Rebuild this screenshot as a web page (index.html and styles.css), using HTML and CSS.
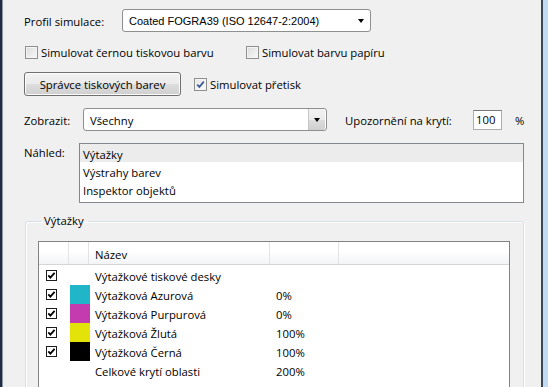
FILE: index.html
```html
<!DOCTYPE html>
<html lang="cs">
<head>
    <meta charset="UTF-8">
    <title>Náhled výstupu</title>
    <link rel="stylesheet" href="styles.css">
</head>
<body>
    <div class="window">
        <div class="frame-left"></div>
        <div class="dialog">
            <div class="row row-profile">
                <span class="label label-profile">Profil simulace:</span>
                <div class="combo combo-profile">
                    <span class="combo-text classic">Coated FOGRA39 (ISO 12647-2:2004)</span>
                    <span class="combo-arrow"><span class="tri"></span></span>
                </div>
            </div>

            <div class="row row-checks">
                <label class="check check-black"><span class="box"></span>Simulovat černou tiskovou barvu</label>
                <label class="check"><span class="box"></span>Simulovat barvu papíru</label>
            </div>

            <div class="row row-button">
                <button class="btn">Správce tiskových barev</button>
                <label class="check">
                    <span class="box checked">
                        <svg width="9" height="9" viewBox="0 0 9 9"><path d="M1.2 4.6 L3.4 6.9 L7.8 1.6" fill="none" stroke="#3c5898" stroke-width="1.7"/></svg>
                    </span>Simulovat přetisk
                </label>
            </div>

            <div class="row row-show">
                <span class="label label-show">Zobrazit:</span>
                <div class="combo combo-show">
                    <span class="combo-text">Všechny</span>
                    <span class="combo-arrow button-look"><span class="tri"></span></span>
                </div>
                <span class="label label-warn">Upozornění na krytí:</span>
                <span class="num-input">100</span>
                <span class="label">%</span>
            </div>

            <div class="row row-preview">
                <span class="label label-preview">Náhled:</span>
                <ul class="listbox">
                    <li class="selected">Výtažky</li>
                    <li>Výstrahy barev</li>
                    <li>Inspektor objektů</li>
                </ul>
            </div>

            <fieldset class="group">
                <legend>Výtažky</legend>
                <div class="sep-table">
                    <div class="sep-row sep-head">
                        <span class="c-check"></span>
                        <span class="c-swatch"></span>
                        <span class="c-name">Název</span>
                        <span class="c-pct"></span>
                        <span class="c-rest"></span>
                    </div>
                    <div class="sep-row">
                        <span class="c-check"><span class="tick"><svg width="9" height="9" viewBox="0 0 9 9"><path d="M1.3 4.3 L3.4 6.6 L7.6 1.8" fill="none" stroke="#000" stroke-width="1.8"/></svg></span></span>
                        <span class="c-swatch"></span>
                        <span class="c-name">Výtažkové tiskové desky</span>
                        <span class="c-pct"></span>
                        <span class="c-rest"></span>
                    </div>
                    <div class="sep-row">
                        <span class="c-check"><span class="tick"><svg width="9" height="9" viewBox="0 0 9 9"><path d="M1.3 4.3 L3.4 6.6 L7.6 1.8" fill="none" stroke="#000" stroke-width="1.8"/></svg></span></span>
                        <span class="c-swatch"><span class="swatch cyan"></span></span>
                        <span class="c-name">Výtažková Azurová</span>
                        <span class="c-pct">0%</span>
                        <span class="c-rest"></span>
                    </div>
                    <div class="sep-row">
                        <span class="c-check"><span class="tick"><svg width="9" height="9" viewBox="0 0 9 9"><path d="M1.3 4.3 L3.4 6.6 L7.6 1.8" fill="none" stroke="#000" stroke-width="1.8"/></svg></span></span>
                        <span class="c-swatch"><span class="swatch magenta"></span></span>
                        <span class="c-name">Výtažková Purpurová</span>
                        <span class="c-pct">0%</span>
                        <span class="c-rest"></span>
                    </div>
                    <div class="sep-row">
                        <span class="c-check"><span class="tick"><svg width="9" height="9" viewBox="0 0 9 9"><path d="M1.3 4.3 L3.4 6.6 L7.6 1.8" fill="none" stroke="#000" stroke-width="1.8"/></svg></span></span>
                        <span class="c-swatch"><span class="swatch yellow"></span></span>
                        <span class="c-name">Výtažková Žlutá</span>
                        <span class="c-pct">100%</span>
                        <span class="c-rest"></span>
                    </div>
                    <div class="sep-row">
                        <span class="c-check"><span class="tick"><svg width="9" height="9" viewBox="0 0 9 9"><path d="M1.3 4.3 L3.4 6.6 L7.6 1.8" fill="none" stroke="#000" stroke-width="1.8"/></svg></span></span>
                        <span class="c-swatch"><span class="swatch black"></span></span>
                        <span class="c-name">Výtažková Černá</span>
                        <span class="c-pct">100%</span>
                        <span class="c-rest"></span>
                    </div>
                    <div class="sep-row">
                        <span class="c-check"></span>
                        <span class="c-swatch"></span>
                        <span class="c-name">Celkové krytí oblasti</span>
                        <span class="c-pct">200%</span>
                        <span class="c-rest"></span>
                    </div>
                    <div class="sep-row"></div>
                </div>
            </fieldset>
        </div>
        <div class="frame-right"></div>
    </div>
</body>
</html>
```

FILE: styles.css
```css
* {
    margin: 0;
    padding: 0;
    box-sizing: border-box;
}

body {
    width: 548px;
    height: 387px;
    overflow: hidden;
    background: #f0f0f0;
    font-family: 'Open Sans', 'Noto Sans', sans-serif;
    font-size: 11.3px;
    color: #000;
}

.window {
    display: flex;
    height: 387px;
}

.frame-left {
    width: 3px;
    border-left: 2px solid #1f2c42;
    background: #8c97a3;
}

.frame-right {
    width: 7px;
    border-left: 2px solid #3a4856;
    background: #c3dbf0;
}

.dialog {
    flex: 1;
    padding: 9px 0 0 21px;
    overflow: hidden;
}

.row {
    display: flex;
    align-items: center;
}

.label {
    white-space: nowrap;
    padding-top: 1px;
}

/* combo boxes */
.combo {
    display: flex;
    align-items: center;
    height: 23px;
    background: #fff;
    border: 1px solid #8e8f8f;
    border-radius: 3px;
}

.combo-text {
    flex: 1;
    padding: 1px 0 0 6px;
    white-space: nowrap;
}

.classic {
    font-family: 'Liberation Sans', Arial, sans-serif;
    font-size: 11px;
}

.combo-arrow {
    width: 17px;
    height: 21px;
    display: flex;
    align-items: center;
    justify-content: center;
    margin-right: 1px;
}

.button-look {
    background: linear-gradient(#f2f2f2, #ebebeb 50%, #dddddd 51%, #cfcfcf);
    border-left: 1px solid #c5c5c5;
    border-radius: 0 2px 2px 0;
}

.tri {
    width: 0;
    height: 0;
    border-left: 3.5px solid transparent;
    border-right: 3.5px solid transparent;
    border-top: 4px solid #000;
    margin-top: 1px;
}

.label-profile {
    width: 98px;
}

.combo-profile {
    width: 249px;
}

/* checkboxes */
.row-checks {
    margin-top: 11px;
    height: 18px;
}

.check {
    display: flex;
    align-items: center;
    gap: 3px;
    white-space: nowrap;
}

.check-black {
    margin-left: 1px;
    width: 221px;
}

.box {
    width: 13px;
    height: 13px;
    border: 1px solid #8e8f8f;
    background: linear-gradient(135deg, #dcdcdc, #f8f8f8);
    box-shadow: inset 0 0 0 1px #f4f4f4;
    display: flex;
    align-items: center;
    justify-content: center;
}

.box.checked {
    background: linear-gradient(135deg, #e6e6e6, #fbfbfb);
}

/* button row */
.row-button {
    margin-top: 11px;
    gap: 13px;
}

.btn {
    width: 157px;
    height: 24px;
    font-family: inherit;
    font-size: 11.3px;
    color: #000;
    border: 1px solid #707070;
    border-radius: 3px;
    background: linear-gradient(#f2f2f2, #ebebeb 48%, #dddddd 52%, #cfcfcf);
    box-shadow: inset 0 0 0 1px #fbfbfb;
}

/* show row */
.row-show {
    margin-top: 12px;
}

.label-show {
    width: 59px;
}

.combo-show {
    width: 244px;
}

.label-warn {
    margin-left: 18px;
    width: 128px;
}

.num-input {
    width: 29px;
    height: 20px;
    padding-left: 2px;
    background: #fff;
    border: 1px solid #abadb3;
    border-top-color: #7a7a7a;
    line-height: 18px;
    margin-right: 13px;
}

/* preview list */
.row-preview {
    margin-top: 12px;
    align-items: flex-start;
}

.label-preview {
    width: 55px;
    padding-top: 2px;
}

.listbox {
    list-style: none;
    width: 445px;
    height: 60px;
    background: #fff;
    border: 1px solid #828790;
}

.listbox li {
    height: 18px;
    line-height: 17px;
    padding: 2px 0 0 3px;
}

.listbox li.selected {
    background: #ececec;
}

/* separations group */
.group {
    margin: 10px 0 0 1px;
    width: 499px;
    height: 200px;
    border: 1px solid #d5dfe5;
    border-radius: 3px;
    box-shadow: inset 1px 1px 0 #fff, 1px 1px 0 #fff;
    padding: 12px 13px 0 12px;
}

.group legend {
    margin-left: 3px;
    padding: 0 4px 0 3px;
    line-height: 16px;
}

.sep-table {
    background: #fff;
    border: 1px solid #828282;
    height: 200px;
}

.sep-row {
    display: flex;
    height: 19px;
    align-items: center;
    white-space: nowrap;
}

.sep-head {
    height: 23px;
    background: linear-gradient(#ffffff, #ffffff 40%, #f3f4f6);
    border-bottom: 1px solid #d5d5d5;
    margin-bottom: 1px;
}

.sep-head span {
    height: 100%;
    display: flex;
    align-items: center;
    border-right: 1px solid #e2e3e4;
}

.sep-head .c-rest {
    border-right: none;
}

.c-check {
    width: 30px;
    padding-left: 7px;
    display: flex;
    align-items: center;
}

.c-swatch {
    width: 20px;
    height: 100%;
}

.c-name {
    width: 181px;
    padding: 2px 0 0 6px;
}

.c-pct {
    width: 69px;
    padding: 2px 0 0 6px;
}

.c-rest {
    flex: 1;
}

.tick {
    width: 11px;
    height: 11px;
    border: 1px solid #1c1c1c;
    background: #fff;
    display: flex;
    align-items: center;
    justify-content: center;
}

.swatch {
    display: block;
    width: 20px;
    height: 19px;
    margin-left: 1px;
}

.cyan { background: #21b5c8; }
.magenta { background: #c23cb0; }
.yellow { background: #e3e30a; }
.black { background: #000; }
```
